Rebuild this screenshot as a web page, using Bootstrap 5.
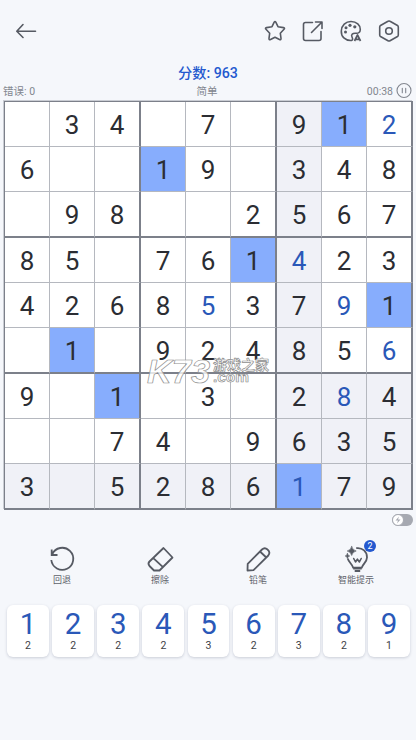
<!DOCTYPE html>
<html lang="zh-CN">
<head>
<meta charset="utf-8">
<meta name="viewport" content="width=device-width, initial-scale=1">
<title>数独</title>
<link href="https://cdn.jsdelivr.net/npm/bootstrap@5.3.0/dist/css/bootstrap.min.css" rel="stylesheet">
<style>
body{width:416px;height:740px;overflow:hidden;background:#f5f7fb;font-family:Roboto,"Noto Sans CJK SC",sans-serif;color:#2b2d33}
svg{display:block;fill:none;stroke:#565a63;stroke-width:1.6;stroke-linecap:round;stroke-linejoin:round;overflow:visible}
.top-bar{height:62px;padding:0 15px 0 14px}
.tools-right{gap:14px}
.score{height:22px;line-height:23px;font-size:14.2px;font-weight:500;color:#2459cf}
.info{height:17px;padding:0 5px 0 3px;font-size:10.5px;line-height:15px;color:#82868f}
.info>div{flex:1 1 0}
.pause{stroke:#82868f;stroke-width:1.1}
.board{margin:0 3px 0 4px;width:409px;display:grid;grid-template-columns:45px 45px 46px 45px 45px 46px 45px 45px 46px;grid-template-rows:45px 45px 46px 45px 45px 46px 45px 45px 46px;border:1px solid #7c808a;border-right:0;border-bottom:0;box-shadow:-1px -1px 0 #c9ccd3}
.cell{background:#fff;border-right:1px solid #b5b8bf;border-bottom:1px solid #b5b8bf;font-size:26px;line-height:1;padding-top:1px}
.cell.box-right{border-right:2px solid #7c808a}
.cell.box-bottom{border-bottom:2px solid #7c808a}
.cell.shade{background:#f0f1f7}
.cell.same{background:#87adfd}
.cell.mine{color:#2a58b8}
.toggle-row{height:20px;padding:4px 3px 0 0}
.switch{width:21px;height:12px;border-radius:6px;background:#a6a9b1}
.knob{width:12px;height:12px;border:1px solid #a6a9b1;background:#fff}
.actions{height:75px;padding:13px 11px 0 13px}
.action{flex:1 1 0;font-size:9px;line-height:14px;color:#5e626a}
.action svg{stroke-width:1.8}
.hint-count{left:22px;top:-3px;width:12px;height:12px;background:#2459cf;font-size:9px;line-height:12px}
.pad{padding:0 6px 0 7px;gap:3.2px}
.key{flex:1 1 0;height:52px;border-radius:6px;background:#fff;box-shadow:0 1px 3px rgba(50,60,90,.22)}
.key b{font-size:29.5px;line-height:31px;font-weight:400;color:#2a58b8;padding-top:4px}
.key span{font-size:10.5px;line-height:12px;color:#3d4046}
.mark-wrap{left:146px;top:356px;width:126px;height:30px}
.mark-wrap text{fill:#fff;fill-opacity:.8;stroke:#8e8e8e;stroke-width:.7}
</style>
<script src="https://cdn.jsdelivr.net/npm/bootstrap@5.3.0/dist/js/bootstrap.bundle.min.js"></script>
</head>
<body class="position-relative">
<header class="top-bar d-flex align-items-center justify-content-between">
  <svg width="24" height="24" viewBox="0 0 24 24"><path d="M21.500 12.300H3M9 5.500L2.800 12.300L9 18.500"/></svg>
  <div class="tools-right d-flex">
    <svg width="24" height="24" viewBox="0 0 24 24"><path d="M11.200 3.200Q12 1.800 12.800 3.200L15 7.700L20.500 8.600Q22.200 9 21 10.300L17.300 14.200L18 19.400Q18.100 21.200 16.500 20.500L12 18.200L7.500 20.500Q5.900 21.200 6 19.400L6.700 14.200L3 10.300Q1.800 9 3.500 8.600L9 7.700Z"/></svg>
    <svg width="24" height="24" viewBox="0 0 24 24"><path d="M11.500 3.500H4.500Q2.500 3.500 2.500 5.500V19.500Q2.500 21.500 4.500 21.500H18Q20 21.500 20 19.500V12.500M10.500 13.500L21 3M14.500 3H21V9.500"/></svg>
    <svg width="24" height="24" viewBox="0 0 24 24"><path d="M12.500 21.500C6 21.800 2 17.500 2.300 12C2.500 6.500 6.700 2.500 12 2.500C17.500 2.500 21.500 6 21.300 10.500C21.200 13.200 19.500 14.500 17 14.300C13.500 14 11.800 15.500 13 18C13.800 19.800 14 21 12.500 21.500"/><g fill="#565a63" stroke="none"><circle cx="6.500" cy="13" r="1.500"/><circle cx="7" cy="8.800" r="1.500"/><circle cx="11" cy="6.300" r="1.600"/><circle cx="15.800" cy="7.800" r="1.600"/></g><path d="M15.500 22L18.500 16L21.500 22M16.700 20.400H20.300" stroke-width="1.700" stroke-linecap="butt"/></svg>
    <svg width="24" height="24" viewBox="0 0 24 24"><path d="M11 2.300Q12 1.700 13 2.300L20.500 6.500Q21.300 7 21.300 8V16Q21.300 17 20.500 17.500L13 21.700Q12 22.300 11 21.700L3.500 17.500Q2.700 17 2.700 16V8Q2.700 7 3.500 6.500Z"/><circle cx="12" cy="12" r="3.300"/></svg>
  </div>
</header>
<main>
  <div class="score text-center">分数: 963</div>
  <div class="info d-flex">
    <div>错误: 0</div>
    <div class="text-center">简单</div>
    <div class="d-flex justify-content-end align-items-start"><span class="me-1">00:38</span>
      <svg class="pause" width="14" height="15" viewBox="0 0 14 15"><circle cx="7" cy="6.500" r="7"/><path d="M5.300 4.300V8.700M8.700 4.300V8.700"/></svg>
    </div>
  </div>
  <div class="board" id="board"></div>
  <div class="toggle-row d-flex justify-content-end">
    <div class="switch"><div class="knob rounded-circle"><svg width="10" height="10" viewBox="0 0 10 10"><path d="M6 1.500L2.500 5.500H5L4 8.500L7.500 4.500H5Z" fill="#a6a9b1" stroke="none"/></svg></div></div>
  </div>
  <div class="actions d-flex">
    <div class="action d-flex flex-column align-items-center">
      <svg width="28" height="30" viewBox="0 0 28 30"><path d="M4.200 11.300A11 11 0 1 1 3.300 17M3.700 6.500V12H9.500" stroke-linecap="butt" stroke-linejoin="miter"/></svg>
      <span>回退</span>
    </div>
    <div class="action d-flex flex-column align-items-center">
      <svg width="28" height="30" viewBox="0 0 28 30"><path d="M17.500 5L26.500 14.500L13.500 27.500H8L3.500 23Q1.500 20.500 3.500 18.500ZM7.300 15.200L17 24.200"/></svg>
      <span>擦除</span>
    </div>
    <div class="action d-flex flex-column align-items-center">
      <svg width="28" height="30" viewBox="0 0 28 30"><path d="M3.500 27.500L3.700 20.800L18 6.500Q20.700 4 23.500 6.500Q26.800 9.300 24.300 12.500L9.500 27.200ZM16 8.500L22.300 14.500"/></svg>
      <span>铅笔</span>
    </div>
    <div class="action d-flex flex-column align-items-center">
      <div class="position-relative">
        <svg width="28" height="30" viewBox="0 0 28 30"><g transform="translate(.7 1)"><path d="M13.500 4.200C20 3.200 24.500 8 24.300 13.500C24.200 18 20.500 19.500 19 23.700H10.500C9.500 20 6.200 18.500 5 14.500" stroke-linecap="butt"/><path d="M10.500 24.500H19M12 27H17.500" stroke-width="2.200" stroke-linecap="butt"/><path d="M11 14.500L12.800 18L14.700 15.200L16.700 18L18.500 14.500" stroke-width="1.600"/><path d="M9 2.500Q9.800 6.200 13.500 7Q9.800 7.800 9 11.500Q8.200 7.800 4.500 7Q8.200 6.200 9 2.500ZM4.700 9.500Q5 11.700 7 12Q5 12.300 4.700 14.500Q4.400 12.300 2.500 12Q4.400 11.700 4.700 9.500Z" fill="#565a63" stroke="#565a63" stroke-width=".6"/></g></svg>
        <span class="hint-count position-absolute rounded-circle text-white text-center">2</span>
      </div>
      <span>智能提示</span>
    </div>
  </div>
  <div class="pad d-flex" id="pad"></div>
</main>
<div class="mark-wrap position-absolute">
  <svg width="126" height="30" viewBox="0 0 126 30" font-family="Liberation Sans, Noto Sans CJK SC, sans-serif" font-weight="700">
    <text x="1" y="26.500" font-size="33" font-style="italic" textLength="63" lengthAdjust="spacingAndGlyphs">K73</text>
    <text x="67" y="13.500" font-size="14" textLength="56" lengthAdjust="spacingAndGlyphs" font-family="Noto Sans CJK SC">游戏之家</text>
    <text x="67" y="26" font-size="15" textLength="36" lengthAdjust="spacingAndGlyphs">.com</text>
  </svg>
</div>
<script>
// Dots are empty cells; "entered" lists the cells filled in by the player.
const rows = ['.34.7.912','6..19.348','.98..2567','85.761423','426853791','.1.924856','9.1.3.284','..74.9635','3.5286179'];
const entered = ['08','36','44','47','58','67','86'];
document.getElementById('board').innerHTML = rows.map((line, r) => [...line].map((d, c) => {
  let k = 'cell d-flex align-items-center justify-content-center';
  if (c === 2 || c === 5 || c === 8) k += ' box-right';
  if (r === 2 || r === 5 || r === 8) k += ' box-bottom';
  if (c === 6 || r === 8 || (r > 5 && c > 5)) k += ' shade';
  if (d === '1') k += ' same';
  if (entered.includes('' + r + c)) k += ' mine';
  return `<div class="${k}">${d === '.' ? '' : d}</div>`;
}).join('')).join('');
document.getElementById('pad').innerHTML = [2,2,2,2,3,2,3,2,1].map((n, i) =>
  `<div class="key d-flex flex-column align-items-center"><b>${i + 1}</b><span>${n}</span></div>`).join('');
</script>
</body>
</html>
